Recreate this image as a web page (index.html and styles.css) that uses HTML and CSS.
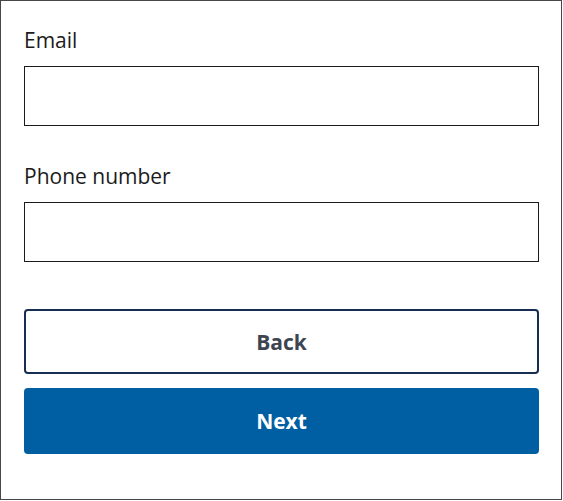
FILE: index.html
```html
<!DOCTYPE html>
<html lang="en">
<head>
<meta charset="utf-8">
<title>Contact</title>
<link rel="stylesheet" href="styles.css">
</head>
<body>
<div class="frame">
  <form class="form">
    <div class="field">
      <label class="label" for="email">Email</label>
      <input class="input" id="email" type="email">
    </div>
    <div class="field field-next">
      <label class="label" for="phone">Phone number</label>
      <input class="input" id="phone" type="tel">
    </div>
    <div class="actions">
      <button type="button" class="btn btn-outline">Back</button>
      <button type="button" class="btn btn-primary">Next</button>
    </div>
  </form>
</div>
</body>
</html>
```
FILE: styles.css
```css
* { box-sizing: border-box; }
html, body { margin: 0; padding: 0; background: #fff; }
body {
  font-family: "Open Sans", "Liberation Sans", sans-serif;
  color: #1b1b1b;
}
.frame {
  width: 562px;
  height: 500px;
  border: 1px solid #474747;
  padding: 0 22px 0 23px;
}
.form { display: flex; flex-direction: column; }
.field { display: flex; flex-direction: column; }
.label {
  font-size: 21px;
  line-height: 24px;
  margin-top: 27px;
  margin-bottom: 14px;
}
.field-next .label { margin-top: 38px; }
.input {
  display: block;
  width: 100%;
  height: 60px;
  border: 1px solid #1b1b1b;
  border-radius: 0;
  margin: 0;
  padding: 0 8px;
  font: inherit;
}
.actions {
  display: flex;
  flex-direction: column;
  gap: 14px;
  margin-top: 47px;
}
.btn {
  display: block;
  width: 100%;
  height: 65px;
  border-radius: 4px;
  font-family: inherit;
  font-size: 21px;
  font-weight: 700;
  margin: 0;
  cursor: pointer;
}
.btn-outline {
  background: #fff;
  border: 2px solid #162e51;
  color: #3d4551;
}
.btn-primary {
  height: 66px;
  background: #005ea2;
  border: 0;
  color: #fff;
}
```
